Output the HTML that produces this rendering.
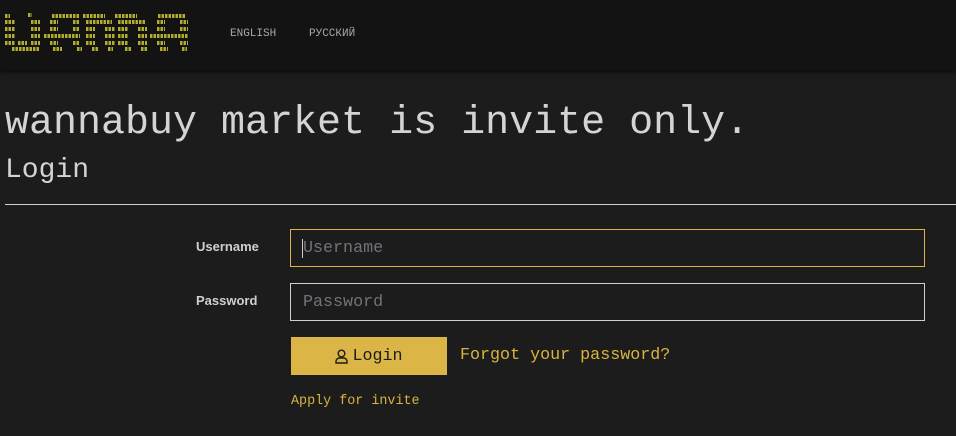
<!DOCTYPE html>
<html><head><meta charset="utf-8"><style>
*{box-sizing:border-box;margin:0;padding:0}
body{width:956px;height:436px;overflow:hidden;background:#1c1c1c;font-family:"Liberation Mono",monospace;color:#d8d8d8;position:relative}
.hdr{position:absolute;left:0;top:0;width:956px;height:70px;background:#131313;box-shadow:0 2px 4px #0a0a0a}
.nav{position:absolute;top:28px;font-size:11px;color:#a8a8a8}
h1{position:absolute;left:5px;top:101px;font-size:40px;font-weight:normal;color:#d4d4d4;white-space:nowrap}
h2{position:absolute;left:5px;top:155px;font-size:28px;font-weight:normal;color:#d4d4d4}
hr{position:absolute;left:5px;top:204px;width:951px;border:0;border-top:1px solid #cfcfcf}
.lbl{position:absolute;left:196px;font-family:"Liberation Sans",sans-serif;font-weight:bold;font-size:13px;color:#cfcfcf}
.inp{position:absolute;left:290px;width:635px;height:38px;border:1px solid #d0d0d0;font-size:16.7px;color:#6f747a;padding:9px 12px;line-height:20px}
.btn{position:absolute;left:291px;top:337px;width:156px;height:38px;background:#dbb545;color:#1c1c1c;font-size:16.7px;display:flex;align-items:center;justify-content:center;gap:4px}
.y{color:#d9b43f;position:absolute}
</style></head><body>
<div class="hdr">
<svg width="200" height="60" style="position:absolute;left:0;top:8px" viewBox="0 8 200 60">
<g stroke="#b3ad2f" stroke-width="4" stroke-dasharray="2.5 1">
<path d="M5 16h5M28 15h4M52 16h28M83 16h22M115 16h22M158 16h27"/>
<path d="M5 22h10M31 22h9M50 22h8M73 22h7M86 22h26M118 22h27M157 22h8M180 22h8"/>
<path d="M5 29h10M31 29h9M50 29h8M73 29h7M86 29h9M105 29h10M118 29h10M138 29h9M157 29h8M180 29h8"/>
<path d="M5 36h10M31 36h9M44 36h36M86 36h9M105 36h10M118 36h10M138 36h9M150 36h38"/>
<path d="M5 43h10M18 43h9M31 43h9M50 43h8M73 43h7M86 43h9M105 43h10M118 43h10M138 43h9M157 43h8M180 43h8"/>
<path d="M12 49h28M53 49h9M77 49h5M92 49h6M108 49h5M125 49h6M141 49h6M160 49h8M182 49h5"/>
</g></svg>
<span class="nav" style="left:230px">ENGLISH</span>
<span class="nav" style="left:309px">РУССКИЙ</span>
</div>
<h1>wannabuy market is invite only.</h1>
<h2>Login</h2>
<hr>
<div class="lbl" style="top:239px">Username</div>
<div class="inp" style="top:229px;border-color:#dbb545"><span style="border-left:1px solid #ccc;margin-left:-1px"></span>Username</div>
<div class="lbl" style="top:293px">Password</div>
<div class="inp" style="top:283px">Password</div>
<div class="btn"><svg width="13" height="15" viewBox="0 0 13 15" fill="none" stroke="#1c1c1c" stroke-width="1.4"><circle cx="6.5" cy="4.5" r="3.3"/><path d="M1 14v-1.5a3.5 3.5 0 0 1 3.5-3.5h4a3.5 3.5 0 0 1 3.5 3.5V14z"/></svg>Login</div>
<span class="y" style="left:460px;top:346px;font-size:16.7px">Forgot your password?</span>
<span class="y" style="left:291px;top:394px;font-size:13.4px">Apply for invite</span>
</body></html>
